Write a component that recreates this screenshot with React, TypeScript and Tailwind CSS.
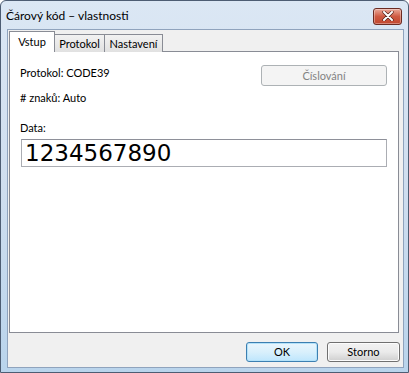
export default function App() {
  return (
    <div className="w-[409px] h-[373px] flex flex-col rounded-t-[6px] border border-[#4d5d73] bg-gradient-to-b from-[#dbe7f4] via-[#cfdeef] to-[#b9d4ec] font-['Lato',sans-serif] text-[11px] text-black">
      {/* title bar */}
      <div className="h-[28px] flex items-center justify-between pl-[5px] pr-[6px]">
        <span className="leading-[16px] text-[12px] pt-[1px]">Čárový kód – vlastnosti</span>
        <div className="mt-[2px] w-[29px] h-[17px] rounded-[3px] border border-[#6b2b22] bg-gradient-to-b from-[#e9a99a] via-[#cf5a42] to-[#c1472e] flex items-center justify-center shadow-[inset_0_0_0_1px_rgba(255,255,255,0.35)]">
          <svg width="12" height="10" viewBox="0 0 12 10">
            <path d="M2 1 L10 9 M10 1 L2 9" stroke="#4a1d16" strokeWidth="3.2" strokeLinecap="round" />
            <path d="M2 1 L10 9 M10 1 L2 9" stroke="#ffffff" strokeWidth="2" strokeLinecap="round" />
          </svg>
        </div>
      </div>

      {/* client area */}
      <div className="flex-1 ml-[6px] mr-[4px] mb-[4px] border border-[#8fa3bd] bg-[#f0f0f0] flex flex-col">
        <div className="flex-1 flex flex-col pl-[1px] pr-[4px] pt-[1px]">
          {/* tabs */}
          <div className="h-[21px] flex items-end relative z-10 -mb-[1px]">
            <div className="h-[21px] w-[46px] border border-b-0 border-[#898c95] bg-white flex items-center justify-center leading-[16px] pb-[1px]">
              Vstup
            </div>
            <div className="h-[18px] w-[50px] border border-l-0 border-b-0 border-[#898c95] bg-gradient-to-b from-[#f2f2f2] to-[#e1e1e1] flex items-center justify-center leading-[16px]">
              Protokol
            </div>
            <div className="h-[18px] w-[58px] border border-l-0 border-b-0 border-[#898c95] bg-gradient-to-b from-[#f2f2f2] to-[#e1e1e1] flex items-center justify-center leading-[16px]">
              Nastavení
            </div>
          </div>

          {/* tab panel */}
          <div className="h-[282px] border border-[#898c95] bg-white pt-[12px] px-[10px] flex flex-col">
            <div className="flex justify-between items-start">
              <span className="leading-[16px] mt-[1px]">Protokol: CODE39</span>
              <div className="mt-[1px] mr-[1px] w-[126px] h-[21px] rounded-[3px] border border-[#adb2b5] bg-[#f4f4f4] text-[#838383] flex items-center justify-center leading-[16px]">
                Číslování
              </div>
            </div>
            <span className="leading-[16px] mt-[4px]">#&nbsp;znaků: Auto</span>
            <span className="leading-[16px] mt-[14px]">Data:</span>
            <div className="mt-[3px] ml-[1px] w-[366px] h-[28px] border border-[#abadb3] border-t-[#8e9099] bg-white flex items-center pl-[3px]">
              <span className="font-['DejaVu_Sans',sans-serif] text-[23px] leading-[26px]">1234567890</span>
            </div>
          </div>

          {/* buttons */}
          <div className="flex justify-end gap-[9px] pt-[9px] -mr-[1px]">
            <div className="w-[72px] h-[20px] rounded-[3px] border border-[#3c7fb1] bg-gradient-to-b from-[#eaf6fd] via-[#d9f0fc] to-[#bee6fd] shadow-[inset_0_0_0_1px_#b4e2f9] flex items-center justify-center leading-[16px]">
              OK
            </div>
            <div className="w-[73px] h-[20px] rounded-[3px] border border-[#707070] bg-gradient-to-b from-[#f2f2f2] via-[#ebebeb] to-[#cfcfcf] shadow-[inset_0_0_0_1px_#fcfcfc] flex items-center justify-center leading-[16px]">
              Storno
            </div>
          </div>
        </div>
      </div>
    </div>
  );
}
